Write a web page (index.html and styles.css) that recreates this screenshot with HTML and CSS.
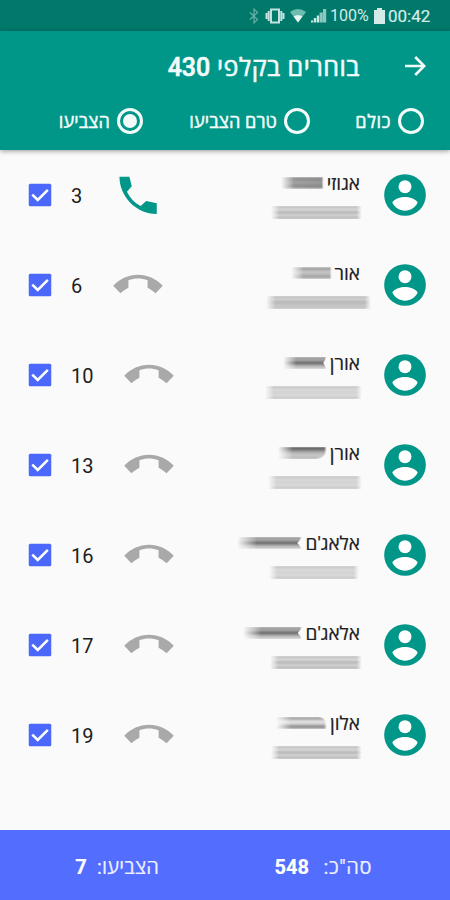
FILE: index.html
```html
<!DOCTYPE html>
<html lang="he" dir="rtl">
<head>
  <meta charset="UTF-8">
  <meta name="viewport" content="width=device-width, initial-scale=1.0">
  <title>בוחרים בקלפי 430</title>
  <link rel="stylesheet" href="styles.css">
</head>

<body>
  <!-- shared icons -->
  <svg class="sprite" width="0" height="0">
    <symbol id="person" viewBox="0 0 24 24">
      <circle cx="12" cy="12" r="10" fill="#009688"/>
      <circle cx="12" cy="8" r="3.1" fill="#fff"/>
      <path fill="#fff" d="M5.9 15.6C7.1 13.7 9.9 13 12 13s4.9.7 6.1 2.6C16.8 18.2 14.6 19.5 12 19.5s-4.8-1.3-6.1-3.9z"/>
    </symbol>
    <symbol id="call" viewBox="0 0 24 24">
      <path d="M3.1 3.200H7.900L9 7.800 6.700 10.400C8.200 13.500 10.400 15.800 13.300 17.300L15.900 14.900 21 15.900V21.100C11 21.100 3.100 12.500 3.100 3.200z"/>
    </symbol>
    <symbol id="call-end" viewBox="0 0 24 24">
      <path d="M12 8.900C10.400 8.900 8.850 9.200 7.400 9.700V13.300C6 14.050 4.800 14.900 3.550 16L.1 12.400C3.300 9 7.500 7.100 12 7.100S20.700 9 23.900 12.400L20.450 16C19.200 14.900 18 14.050 16.600 13.300V9.700C15.150 9.200 13.600 8.900 12 8.900z"/>
    </symbol>
    <symbol id="check" viewBox="0 0 24 24">
      <rect x="3" y="3" width="18" height="18" rx="1.200" fill="#4b68fb"/>
      <path d="M5.800 11.700L10.200 16L18.300 7.900" fill="none" stroke="#fff" stroke-width="2"/>
    </symbol>
  </svg>

  <div class="status-bar" dir="ltr">
    <svg class="bluetooth" viewBox="0 0 10 16" width="10" height="16">
      <path d="M1 4.500L8.500 11.500L5 15V1L8.500 4.500L1 11.500"/>
    </svg>
    <svg class="vibrate" viewBox="0 0 20 16" width="20" height="16">
      <path d="M1.500 5v6M3.700 3v10M16.300 3v10M18.500 5v6" stroke-width="2"/>
      <rect x="6" y="1.500" width="8" height="13" stroke-width="2"/>
    </svg>
    <svg class="wifi" viewBox="0 0 18 16" width="18" height="16">
      <path d="M1 4Q9-2 17 4L9 14.500z" fill="#6fbcb1"/>
      <path d="M4.600 8.500Q9 5.500 13.400 8.500L9 14.500z" fill="#e6f5f2"/>
    </svg>
    <svg class="signal" viewBox="0 0 16 16" width="16" height="16">
      <path d="M1 14.500v-2M4 14.500v-4.500M7 14.500v-7" stroke="#cfe8e4" stroke-width="2.400"/>
      <path d="M10.200 14.500v-10M13.600 14.500V1" stroke="#8cc8bf" stroke-width="3.200"/>
    </svg>
    <span class="percent">100%</span>
    <svg class="battery" viewBox="0 0 11 16" width="11" height="16">
      <path d="M0 2h3V0h5v2h3v14H0z"/>
    </svg>
    <span class="clock">00:42</span>
  </div>

  <header class="app-bar">
    <div class="title-row">
      <svg class="arrow" viewBox="0 0 22 22" width="22" height="22">
        <path d="M1 11H20M11.200 2L20.200 11L11.200 20"/>
      </svg>
      <h1>בוחרים בקלפי <b>430</b></h1>
    </div>
    <div class="filters">
      <label class="filter all"><span class="radio"></span>כולם</label>
      <label class="filter not-yet"><span class="radio"></span>טרם הצביעו</label>
      <label class="filter voted"><span class="radio checked"></span>הצביעו</label>
    </div>
  </header>

  <main class="voters">
    <div class="voter">
      <svg class="avatar"><use href="#person"/></svg>
      <div class="details">
        <div class="name">אגוזי <span class="smudge dark" style="width: 43px"></span></div>
        <div class="smudge address lined" style="width: 91px"></div>
      </div>
      <svg class="phone active"><use href="#call"/></svg>
      <span class="number">3</span>
      <svg class="checkbox"><use href="#check"/></svg>
    </div>
    <div class="voter">
      <svg class="avatar"><use href="#person"/></svg>
      <div class="details">
        <div class="name">אור <span class="smudge even" style="width: 41px"></span></div>
        <div class="smudge address wide" style="width: 105px"></div>
      </div>
      <svg class="phone"><use href="#call-end"/></svg>
      <span class="number">6</span>
      <svg class="checkbox"><use href="#check"/></svg>
    </div>
    <div class="voter">
      <svg class="avatar"><use href="#person"/></svg>
      <div class="details">
        <div class="name">אורן <span class="smudge forked" style="width: 44px"></span></div>
        <div class="smudge address" style="width: 97px"></div>
      </div>
      <svg class="phone"><use href="#call-end"/></svg>
      <span class="number">10</span>
      <svg class="checkbox"><use href="#check"/></svg>
    </div>
    <div class="voter">
      <svg class="avatar"><use href="#person"/></svg>
      <div class="details">
        <div class="name">אורן <span class="smudge top" style="width: 49px"></span></div>
        <div class="smudge address" style="width: 94px"></div>
      </div>
      <svg class="phone"><use href="#call-end"/></svg>
      <span class="number">13</span>
      <svg class="checkbox"><use href="#check"/></svg>
    </div>
    <div class="voter">
      <svg class="avatar"><use href="#person"/></svg>
      <div class="details">
        <div class="name">אלאג'ם <span class="smudge forked" style="width: 66px"></span></div>
        <div class="smudge address short" style="width: 90px"></div>
      </div>
      <svg class="phone"><use href="#call-end"/></svg>
      <span class="number">16</span>
      <svg class="checkbox"><use href="#check"/></svg>
    </div>
    <div class="voter">
      <svg class="avatar"><use href="#person"/></svg>
      <div class="details">
        <div class="name">אלאג'ם <span class="smudge forked" style="width: 60px"></span></div>
        <div class="smudge address lined" style="width: 92px"></div>
      </div>
      <svg class="phone"><use href="#call-end"/></svg>
      <span class="number">17</span>
      <svg class="checkbox"><use href="#check"/></svg>
    </div>
    <div class="voter">
      <svg class="avatar"><use href="#person"/></svg>
      <div class="details">
        <div class="name">אלון <span class="smudge bottom" style="width: 51px"></span></div>
        <div class="smudge address lined" style="width: 91px"></div>
      </div>
      <svg class="phone"><use href="#call-end"/></svg>
      <span class="number">19</span>
      <svg class="checkbox"><use href="#check"/></svg>
    </div>
  </main>

  <footer class="totals">
    <div class="total">סה"כ: <b>548</b></div>
    <div class="total voted-total">הצביעו: <b>7</b></div>
  </footer>
</body>
</html>
```
FILE: styles.css
```css
* {
  box-sizing: border-box;
}
body {
  margin: 0;
  width: 450px;
  height: 900px;
  overflow: hidden;
  display: flex;
  flex-direction: column;
  background: #fafafa;
  color: #202020;
  font-family: Roboto, "Open Sans", sans-serif;
}
svg {
  display: block;
  flex: none;
}
.sprite {
  position: absolute;
}
.status-bar {
  flex: none;
  height: 31px;
  padding-right: 18px;
  display: flex;
  align-items: center;
  justify-content: flex-end;
  background: #00796b;
  color: #d5ebe8;
  font-size: 16px;
}
.bluetooth {
  margin-right: 6px;
  fill: none;
  stroke: #68afa6;
  stroke-width: 1.2;
}
.vibrate {
  margin-right: 4px;
  fill: none;
  stroke: #c5e2de;
}
.wifi {
  margin-right: 4px;
}
.signal {
  margin-right: 3px;
}
.battery {
  margin: 0 3px 0 6px;
  fill: #d5ebe8;
}
.percent {
  width: 38px;
}
.clock {
  width: 44px;
  font-size: 17px;
  -webkit-text-stroke: 0.2px;
}
.app-bar {
  flex: none;
  height: 119px;
  background: #009688;
  color: #f2fbfa;
  box-shadow: 0 1px 5px rgba(0, 0, 0, 0.4);
}
.title-row {
  display: flex;
  align-items: center;
  height: 70px;
  padding-right: 24px;
}
.arrow {
  fill: none;
  stroke: #f2fbfa;
  stroke-width: 2.6;
}
h1 {
  margin: 0 44px 0 0;
  font-size: 25px;
  font-weight: 500;
  letter-spacing: 0.55px;
  -webkit-text-stroke: 0.6px;
}
h1 b {
  font-weight: 500;
  letter-spacing: 0;
}
.filters {
  display: flex;
  height: 40px;
  align-items: center;
  padding-right: 26px;
}
.filter {
  display: flex;
  align-items: center;
  gap: 7px;
  font-size: 18px;
  font-weight: 500;
  letter-spacing: 0.15px;
  -webkit-text-stroke: 0.5px;
}
.all {
  width: 114px;
  letter-spacing: 0.6px;
}
.not-yet {
  width: 167px;
}
.radio {
  width: 26px;
  height: 26px;
  border: 3px solid #f2fbfa;
  border-radius: 50%;
}
.checked {
  padding: 3px;
  background-color: #f2fbfa;
  background-clip: content-box;
}
.voters {
  flex: 1;
}
.voter {
  display: flex;
  align-items: center;
  height: 90px;
  padding: 0 20px 0 25px;
}
.avatar {
  width: 50px;
  height: 50px;
}
.details {
  flex: 1;
  height: 50px;
  margin-right: 20px;
}
.name {
  display: flex;
  align-items: center;
  gap: 3px;
  height: 26px;
  font-size: 19px;
  white-space: nowrap;
  -webkit-text-stroke: 0.2px;
}
.phone {
  width: 50px;
  height: 50px;
  fill: #a9a9a9;
}
.active {
  fill: #009688;
}
.number {
  margin: 2px 31px 0 16px;
  font-size: 20px;
  direction: ltr;
}
.checkbox {
  width: 30px;
  height: 30px;
}
/* smeared out private details */
.smudge {
  flex: none;
  height: 12px;
  background: linear-gradient(#bbb, #777 20%, #aaa 50%, #999 80%, #ddd);
  filter: blur(1px);
  -webkit-mask-image: linear-gradient(to right, transparent, #000 30%, #000 94%, transparent);
  mask-image: linear-gradient(to right, transparent, #000 30%, #000 94%, transparent);
}
.even {
  background: linear-gradient(#aaa, #999 15%, #ccc 40%, #bbb 60%, #999 85%, #ccc);
}
.dark {
  background: linear-gradient(to right, #aaa6, #8886), linear-gradient(#777, #aaa 50%, #777 80%, #ccc);
}
.forked {
  background: linear-gradient(#777, #bbb 25%, #555 50%, #bbb 72%, #ccc);
  clip-path: polygon(0 0, 100% 0, 92% 50%, 100% 100%, 0 100%);
}
.top {
  background: linear-gradient(#333, #777 20%, #bbb 50%, #ccc 80%, #999);
  border-radius: 0 0 10px 0;
}
.bottom {
  background: linear-gradient(#777, #aaa 15%, #eee 40%, #ccc 60%, #777 85%, #ccc);
  border-radius: 0 8px 0 0;
}
.address {
  height: 13px;
  margin-top: 10px;
  margin-right: -2px;
  background: linear-gradient(#a8a8a8, #dcdcdc 20%, #d2d2d2 50%, #ddd 80%, #aaa);
  -webkit-mask-image: linear-gradient(to right, transparent, #000 9%, #000 94%, transparent);
  mask-image: linear-gradient(to right, transparent, #000 9%, #000 94%, transparent);
}
.lined {
  background: linear-gradient(#a0a0a0, #e6e6e6 25%, #b0b0b0 48%, #ddd 75%, #999);
}
.wide {
  margin-right: -11px;
  background: linear-gradient(#999, #ddd 20%, #b4b4b4 45%, #ccc 80%, #b0b0b0);
}
.short {
  margin-right: 1px;
}
.totals {
  flex: none;
  height: 70px;
  display: flex;
  align-items: center;
  padding: 2px 78px 0 0;
  background: #536dfe;
  color: #eef0ff;
  font-size: 20px;
  -webkit-text-stroke: 0.2px;
}
.total {
  flex: none;
  width: 213px;
  letter-spacing: 0.6px;
}
.total b {
  margin-right: 9px;
  color: #fff;
  letter-spacing: 0;
}
.voted-total {
  width: 150px;
  letter-spacing: 0.2px;
}
.voted-total b {
  margin-right: 5px;
}
```
